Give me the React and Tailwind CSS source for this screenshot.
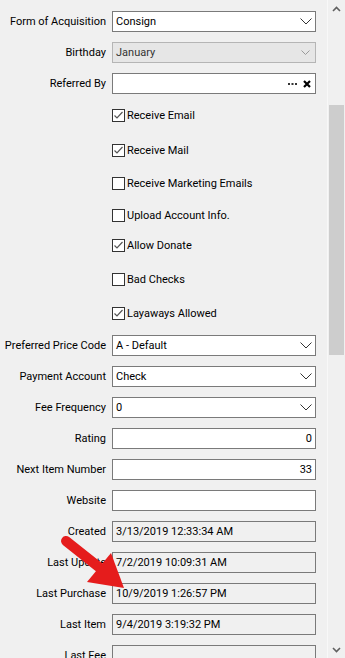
import React from "react";

const font = { fontFamily: 'Roboto, "Liberation Sans", sans-serif' };

const Chevron = ({ light }) =>
  light ? (
    <svg width="9" height="6" viewBox="0 0 9 6" className="mr-[5px]">
      <path d="M0.5 0.5 L4.5 4.5 L8.5 0.5" fill="none" stroke="#9a9a9a" strokeWidth="1" />
    </svg>
  ) : (
    <svg width="12" height="7" viewBox="0 0 12 7" className="mr-[3px]">
      <path d="M0.5 0.5 L6 6 L11.5 0.5" fill="none" stroke="#333" strokeWidth="1" />
    </svg>
  );

const Row = ({ label, children }) => (
  <div className="flex shrink-0 items-center h-[21px] mb-[10px]">
    <div className="w-[106px] text-right whitespace-nowrap text-black">{label}</div>
    <div className="ml-[6px] w-[204px] h-[21px] flex">{children}</div>
  </div>
);

const Select = ({ value, disabled }) => (
  <div
    className={
      disabled
        ? "w-full h-full flex items-center justify-between border border-[#b5b5b5] bg-[#e6e6e6] pl-[3px] text-[#333]"
        : "w-full h-full flex items-center justify-between border border-[#7a7a7a] bg-white pl-[3px] text-black"
    }
  >
    <span>{value}</span>
    <Chevron light={disabled} />
  </div>
);

const Input = ({ value, right, readOnly }) => (
  <div
    className={
      (readOnly ? "bg-[#f0f0f0] " : "bg-white ") +
      "w-full h-full flex items-center border border-[#7a7a7a] px-[3px] text-black " +
      (right ? "justify-end" : "justify-start")
    }
  >
    {value}
  </div>
);

const Check = ({ label, checked, h }) => (
  <div className={"flex shrink-0 items-start pl-[112px] " + h}>
    <div className="flex items-center h-[13px]">
      <div className="w-[13px] h-[13px] border border-[#333] bg-white flex items-center justify-center">
        {checked && (
          <svg width="11" height="11" viewBox="0 0 11 11">
            <path d="M1.5 5.5 L4 8 L9.5 2" fill="none" stroke="#555" strokeWidth="1.2" />
          </svg>
        )}
      </div>
      <span className="ml-[2px] whitespace-nowrap text-black">{label}</span>
    </div>
  </div>
);

export default function App() {
  return (
    <div className="relative flex w-[345px] h-[658px] overflow-hidden bg-[#f0f0f0] text-[11px] leading-none" style={font}>
      {/* form */}
      <div className="flex-1 flex flex-col pt-[11px]">
        <Row label="Form of Acquisition">
          <Select value="Consign" />
        </Row>
        <Row label="Birthday">
          <Select value="January" disabled />
        </Row>
        <div className="flex shrink-0 items-center h-[21px] mb-[15px]">
          <div className="w-[106px] text-right whitespace-nowrap text-black">Referred By</div>
          <div className="ml-[6px] w-[204px] h-[21px] flex items-center justify-end border border-[#7a7a7a] bg-white pr-[4px]">
            <svg width="9" height="2" viewBox="0 0 9 2" className="mr-[6px]">
              <rect x="0" y="0" width="2" height="2" fill="#333" />
              <rect x="3.5" y="0" width="2" height="2" fill="#333" />
              <rect x="7" y="0" width="2" height="2" fill="#333" />
            </svg>
            <svg width="8" height="8" viewBox="0 0 8 8">
              <path d="M1 1 L7 7 M7 1 L1 7" stroke="#000" strokeWidth="2.2" />
            </svg>
          </div>
        </div>

        {/* checkboxes */}
        <Check label="Receive Email" checked h="h-[35px]" />
        <Check label="Receive Mail" checked h="h-[33px]" />
        <Check label="Receive Marketing Emails" h="h-[32px]" />
        <Check label="Upload Account Info." h="h-[30px]" />
        <Check label="Allow Donate" checked h="h-[34px]" />
        <Check label="Bad Checks" h="h-[34px]" />
        <Check label="Layaways Allowed" checked h="h-[28px]" />

        <Row label="Preferred Price Code">
          <Select value="A - Default" />
        </Row>
        <Row label="Payment Account">
          <Select value="Check" />
        </Row>
        <Row label="Fee Frequency">
          <Select value="0" />
        </Row>
        <Row label="Rating">
          <Input value="0" right />
        </Row>
        <Row label="Next Item Number">
          <Input value="33" right />
        </Row>
        <Row label="Website">
          <Input value="" />
        </Row>
        <Row label="Created">
          <Input value="3/13/2019 12:33:34 AM" readOnly />
        </Row>
        <Row label="Last Update">
          <Input value="7/2/2019 10:09:31 AM" readOnly />
        </Row>
        <Row label="Last Purchase">
          <Input value="10/9/2019 1:26:57 PM" readOnly />
        </Row>
        <Row label="Last Item">
          <Input value="9/4/2019 3:19:32 PM" readOnly />
        </Row>
        <Row label="Last Fee">
          <Input value="" readOnly />
        </Row>
      </div>

      {/* scrollbar */}
      <div className="w-[18px] h-full shrink-0 border-l border-[#f8f8f8] bg-[#f0f0f0] flex flex-col">
        <div className="h-[17px] shrink-0 flex items-center justify-center">
          <svg width="9" height="6" viewBox="0 0 9 6">
            <path d="M1 5 L4.5 1.5 L8 5" fill="none" stroke="#606060" strokeWidth="1.6" />
          </svg>
        </div>
        <div className="mt-[88px] mx-[1px] h-[250px] shrink-0 bg-[#cdcdcd]" />
        <div className="flex-1" />
        <div className="h-[17px] shrink-0 flex items-center justify-center">
          <svg width="9" height="6" viewBox="0 0 9 6">
            <path d="M1 1 L4.5 4.5 L8 1" fill="none" stroke="#606060" strokeWidth="1.6" />
          </svg>
        </div>
      </div>

      {/* red annotation arrow */}
      <svg className="absolute top-0 left-0 pointer-events-none" width="345" height="658" viewBox="0 0 345 658">
        <line x1="66" y1="541" x2="100" y2="568" stroke="#e51c1c" strokeWidth="10" strokeLinecap="round" />
        <polygon points="87,582 111,553 124,588" fill="#e51c1c" />
      </svg>
    </div>
  );
}
